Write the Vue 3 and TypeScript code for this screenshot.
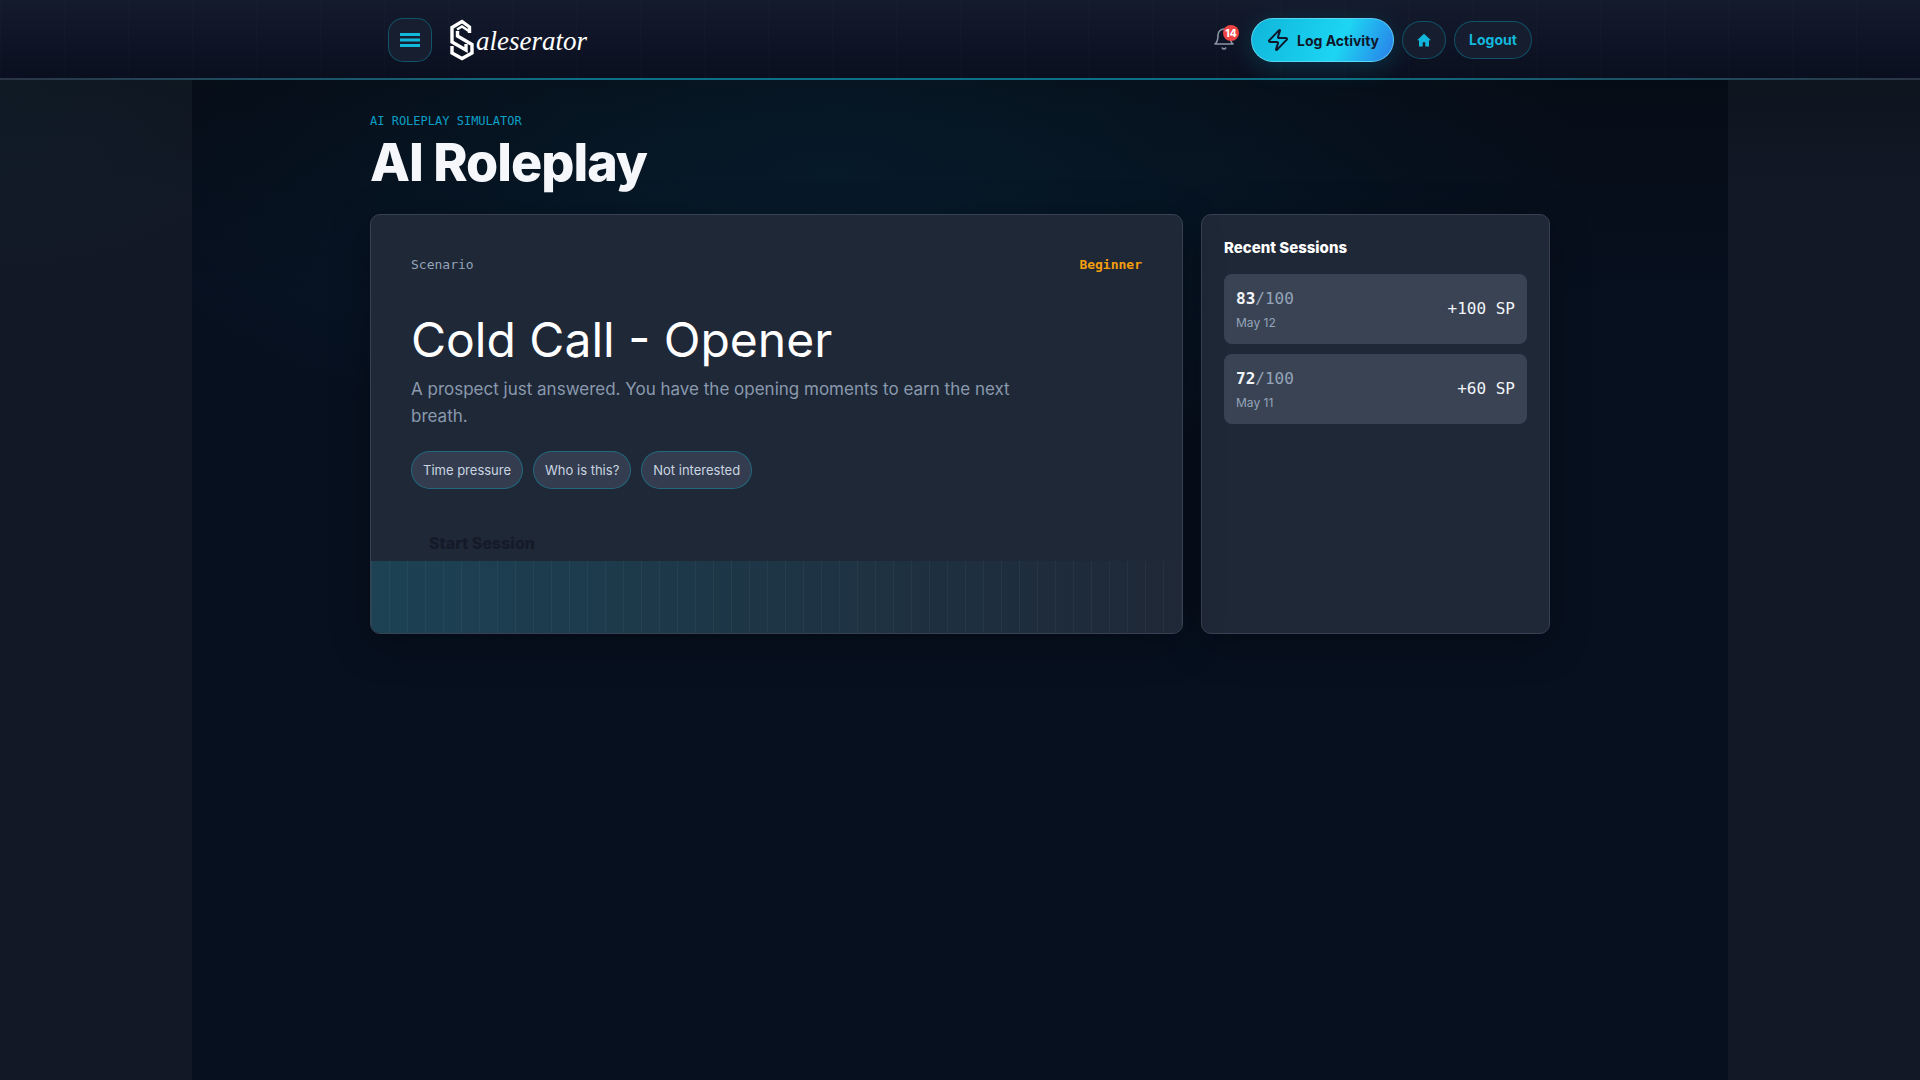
<script setup lang="ts">
interface Session { score: number; date: string; sp: string }
const chips: string[] = ['Time pressure', 'Who is this?', 'Not interested']
const sessions: Session[] = [
  { score: 83, date: 'May 12', sp: '+100 SP' },
  { score: 72, date: 'May 11', sp: '+60 SP' },
]
</script>

<template>
  <div class="page">
    <header class="topbar">
      <div class="topbar-inner">
        <div class="brand-group">
          <button class="menu-btn" aria-label="Menu">
            <svg width="20" height="14" viewBox="0 0 20 14"><path d="M0 1.5h20M0 7h20M0 12.5h20" stroke="#12b8dc" stroke-width="3" /></svg>
          </button>
          <div class="brand">
            <svg class="brand-mark" width="24" height="44" viewBox="0 0 24 44" fill="none" stroke="#fff" stroke-width="3.4" stroke-linejoin="miter">
              <path d="M19.5 15V9L12 3.5 2 9.5v14.5l14 8v-6" />
              <path d="M7.5 13V18L22 26.5V35L12 40.5 2 35V28" />
              <path d="M7 11.5 12 8.5l7.5 5" stroke-width="2.4" />
            </svg>
            <span class="brand-name">aleserator</span>
          </div>
        </div>
        <div class="actions">
          <button class="bell" aria-label="Notifications">
            <svg width="24" height="24" viewBox="0 0 24 24" fill="none" stroke="#8b95a5" stroke-width="1.6" stroke-linecap="round" stroke-linejoin="round">
              <path d="M6 8a6 6 0 0 1 12 0c0 7 3 9 3 9H3s3-2 3-9" />
              <path d="M10.3 21a1.94 1.94 0 0 0 3.4 0" />
            </svg>
            <span class="badge">14</span>
          </button>
          <button class="log-btn">
            <svg width="24" height="24" viewBox="0 0 24 24" fill="none" stroke="#0f172a" stroke-width="2" stroke-linecap="round" stroke-linejoin="round">
              <path d="M4 14a1 1 0 0 1-.78-1.63l9.9-10.2a.5.5 0 0 1 .86.46l-1.92 6.02A1 1 0 0 0 13 10h7a1 1 0 0 1 .78 1.63l-9.9 10.2a.5.5 0 0 1-.86-.46l1.92-6.02A1 1 0 0 0 11 14z" />
            </svg>
            <span>Log Activity</span>
          </button>
          <button class="ghost home" aria-label="Home">
            <svg width="14" height="14" viewBox="0 0 14 14"><path d="M7 .8 0 7.2h2V13.4h3.7V9.2h2.6v4.2H12V7.2h2z" fill="#12b8dc" /></svg>
          </button>
          <button class="ghost logout">Logout</button>
        </div>
      </div>
    </header>

    <main class="main">
      <div class="content">
        <p class="eyebrow">AI ROLEPLAY SIMULATOR</p>
        <h1 class="title">AI Roleplay</h1>
        <div class="grid">
          <section class="card scenario">
            <div class="scenario-head">
              <span class="label">Scenario</span>
              <span class="level">Beginner</span>
            </div>
            <h2 class="scenario-title">Cold Call - Opener</h2>
            <p class="scenario-desc">A prospect just answered. You have the opening moments to earn the next breath.</p>
            <div class="chips">
              <span v-for="chip in chips" :key="chip" class="chip">{{ chip }}</span>
            </div>
            <button class="start">Start Session</button>
            <div class="band"></div>
          </section>
          <aside class="card recent">
            <h3 class="recent-title">Recent Sessions</h3>
            <ul class="sessions">
              <li v-for="s in sessions" :key="s.date" class="session">
                <div>
                  <div class="score"><b>{{ s.score }}</b><span>/100</span></div>
                  <div class="date">{{ s.date }}</div>
                </div>
                <div class="sp">{{ s.sp }}</div>
              </li>
            </ul>
          </aside>
        </div>
      </div>
    </main>
  </div>
</template>

<style>
html, body { margin: 0; background: #121826; }
</style>

<style scoped>
.page {
  min-height: 100vh;
  background:
    radial-gradient(300px 200px at 0 80px, rgba(6, 182, 212, 0.03), transparent),
    linear-gradient(180deg, #0f151f 80px, #121826 200px);
  font-family: Inter, "Liberation Sans", sans-serif;
}
button { font-family: inherit; cursor: pointer; }

.topbar {
  height: 80px;
  box-sizing: border-box;
  position: relative;
  border-bottom: 2px solid;
  border-image: linear-gradient(90deg, #2a3444, #0f6f86 30%, #0f6f86 70%, #2a3444) 1;
  background:
    repeating-linear-gradient(90deg, rgba(255, 255, 255, 0.012) 0 1px, transparent 1px 64px),
    linear-gradient(180deg, #141b2d, #0a0f1f);
}
.topbar-inner {
  width: 1144px;
  height: 78px;
  margin: 0 auto;
  display: flex;
  align-items: center;
  justify-content: space-between;
  box-sizing: border-box;
  padding-top: 2px;
}
.brand-group { display: flex; align-items: center; gap: 18px; }
.menu-btn {
  width: 44px;
  height: 44px;
  padding: 0;
  display: flex;
  align-items: center;
  justify-content: center;
  background: #171e2f;
  border: 1px solid rgba(6, 182, 212, 0.35);
  border-radius: 15px;
}
.brand { display: flex; align-items: center; gap: 2px; }
.brand-name {
  font-family: "Liberation Serif", serif;
  font-style: italic;
  font-size: 27px;
  line-height: 44px;
  color: #fff;
  position: relative;
  top: 1px;
}
.actions { display: flex; align-items: center; gap: 8px; }
.bell {
  position: relative;
  width: 24px;
  height: 24px;
  padding: 0;
  margin-right: 7px;
  margin-top: -2px;
  background: none;
  border: 0;
}
.bell svg { display: block; }
.badge {
  position: absolute;
  left: 11px;
  top: -2px;
  width: 16px;
  height: 16px;
  border-radius: 50%;
  background: #ef4444;
  color: #fff;
  font-size: 10px;
  font-weight: 800;
  line-height: 16px;
  text-align: center;
}
.log-btn {
  width: 143px;
  height: 44px;
  padding: 0 0 0 14px;
  display: flex;
  align-items: center;
  gap: 7px;
  color: #0f172a;
  font-size: 14px;
  font-weight: 700;
  border: 1px solid rgba(125, 230, 250, 0.6);
  border-radius: 22px;
  background: linear-gradient(115deg, #0fb6da 0%, #1dd5f2 62%, #2a7de9 100%);
  box-shadow: 0 6px 24px rgba(6, 182, 212, 0.2);
}
.ghost {
  height: 38px;
  padding: 0 0 1px;
  display: flex;
  align-items: center;
  justify-content: center;
  color: #12b8dc;
  font-size: 14px;
  font-weight: 700;
  background: #161d2e;
  border: 1px solid rgba(6, 182, 212, 0.35);
  border-radius: 19px;
}
.home { width: 44px; }
.logout { width: 78px; }

.main {
  width: 1536px;
  min-height: 1000px;
  margin: 0 auto;
  box-sizing: border-box;
  padding-top: 33px;
  background:
    radial-gradient(760px 300px at 640px 90px, rgba(6, 90, 120, 0.16), transparent),
    linear-gradient(180deg, #060c16, #07101f 220px);
}
.content { width: 1180px; margin: 0 auto; }
.eyebrow {
  margin: 0;
  font-family: "DejaVu Sans Mono", "Liberation Mono", monospace;
  font-size: 12px;
  line-height: 16px;
  color: #0b9fc6;
}
.title {
  margin: 6px 0 23px;
  font-size: 52px;
  line-height: 56px;
  font-weight: 800;
  letter-spacing: -1px;
  color: #f5f7fb;
}
.grid {
  display: grid;
  grid-template-columns: 813px 349px;
  gap: 18px;
}
.card {
  background: #1f2837;
  border: 1px solid #374151;
  border-radius: 10px;
  box-sizing: border-box;
  height: 420px;
  box-shadow: 0 10px 40px rgba(0, 0, 0, 0.3);
}
.scenario {
  position: relative;
  overflow: hidden;
  padding: 42px 40px 40px;
}
.scenario-head {
  display: flex;
  justify-content: space-between;
  font-family: "DejaVu Sans Mono", "Liberation Mono", monospace;
  font-size: 13px;
  line-height: 16px;
}
.label { color: #94a3b8; }
.level { color: #f59e0b; font-weight: 700; }
.scenario-title {
  margin: 38px 0 7px;
  font-size: 48px;
  line-height: 58px;
  font-weight: 400;
  color: #fff;
}
.scenario-desc {
  margin: 0;
  max-width: 620px;
  font-size: 17px;
  line-height: 27px;
  color: #8a99ad;
}
.chips { display: flex; gap: 10px; margin-top: 21px; }
.chip {
  height: 38px;
  box-sizing: border-box;
  padding: 0 11px;
  display: flex;
  align-items: center;
  font-size: 13px;
  color: #cbd5e1;
  background: #333d4f;
  border: 1px solid rgba(6, 182, 212, 0.35);
  border-radius: 19px;
}
.start {
  display: block;
  height: 44px;
  margin-top: 32px;
  padding: 0 18px;
  background: none;
  border: 0;
  font-size: 16px;
  font-weight: 800;
  color: #141a28;
}
.band {
  position: absolute;
  left: 0;
  right: 0;
  bottom: 0;
  height: 72px;
  background-image:
    linear-gradient(90deg, rgba(255, 255, 255, 0.04) 1px, transparent 1px),
    linear-gradient(90deg, #1c4254, #1f2837);
  background-size: 18px 100%, 100% 100%;
  background-position: 18px 0, 0 0;
}
.recent { padding: 23px 22px 22px; }
.recent-title {
  margin: 0 0 16px;
  font-size: 15px;
  line-height: 20px;
  font-weight: 800;
  color: #fff;
}
.sessions {
  margin: 0;
  padding: 0;
  list-style: none;
  display: flex;
  flex-direction: column;
  gap: 10px;
}
.session {
  height: 70px;
  box-sizing: border-box;
  padding: 0 12px;
  display: flex;
  align-items: center;
  justify-content: space-between;
  background: #3a4354;
  border-radius: 8px;
}
.score {
  font-family: "DejaVu Sans Mono", "Liberation Mono", monospace;
  font-size: 16px;
  line-height: 24px;
  color: #94a3b8;
}
.score b { color: #f1f5f9; font-weight: 700; }
.date {
  font-size: 12px;
  line-height: 16px;
  margin-top: 4px;
  color: #94a3b8;
}
.sp {
  font-family: "DejaVu Sans Mono", "Liberation Mono", monospace;
  font-size: 16px;
  padding-bottom: 2px;
  color: #f1f5f9;
}
</style>
